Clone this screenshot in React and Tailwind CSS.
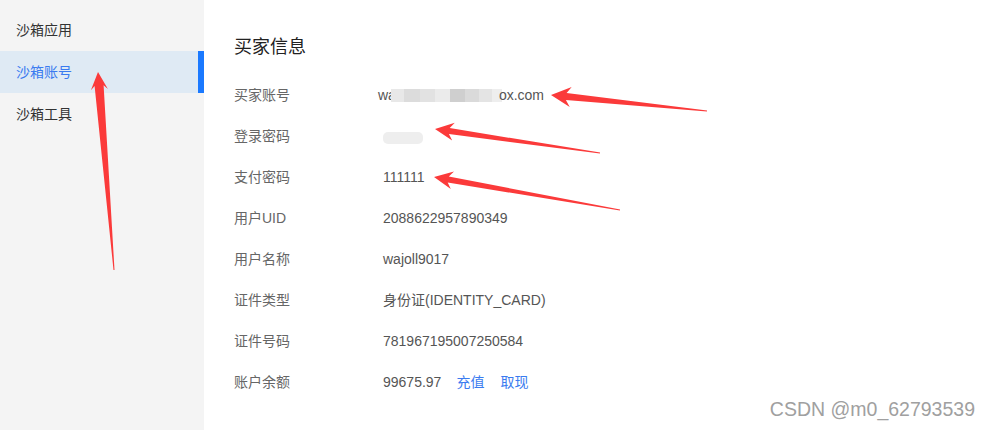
import React from "react";

function arrowPoints(tip, tail, h, w, s1, s0) {
  const dx = tail[0] - tip[0];
  const dy = tail[1] - tip[1];
  const len = Math.hypot(dx, dy);
  const d = [dx / len, dy / len];
  const n = [-d[1], d[0]];
  const P = (base, k, m) => [base[0] + d[0] * k + n[0] * m, base[1] + d[1] * k + n[1] * m];
  const pts = [
    tip,
    P(tip, h * 1.1, w / 2),
    P(tip, h * 0.85, s1 / 2),
    P(tail, 0, s0 / 2),
    P(tail, 0, -s0 / 2),
    P(tip, h * 0.85, -s1 / 2),
    P(tip, h * 1.1, -w / 2),
  ];
  return pts.map((p) => p[0].toFixed(1) + "," + p[1].toFixed(1)).join(" ");
}

const arrows = [
  { tip: [551, 95], tail: [707, 111], h: 18, w: 20, s1: 7, s0: 1 },
  { tip: [435, 129], tail: [600, 153], h: 17, w: 18, s1: 6, s0: 1 },
  { tip: [434, 177], tail: [620, 210], h: 17, w: 18, s1: 6, s0: 1 },
  { tip: [98, 72], tail: [114, 270], h: 16, w: 17, s1: 9, s0: 1 },
];

const rows = [
  { label: "买家账号", value: "email" },
  { label: "登录密码", value: "blur" },
  { label: "支付密码", value: "111111" },
  { label: "用户UID", value: "2088622957890349" },
  { label: "用户名称", value: "wajoll9017" },
  { label: "证件类型", value: "身份证(IDENTITY_CARD)" },
  { label: "证件号码", value: "781967195007250584" },
  { label: "账户余额", value: "balance" },
];

function Value({ v }) {
  if (v === "email") {
    return (
      <span className="ml-[-5px] flex items-center">
        <span>wa</span>
        <span className="flex h-[13px] items-stretch ml-[-5px]">
          <span className="w-[13px] bg-[#e8e8e8]" />
          <span className="w-[16px] bg-[#dcdcdc]" />
          <span className="w-[15px] bg-[#e2e2e2]" />
          <span className="w-[15px] bg-[#ebebeb]" />
          <span className="w-[15px] bg-[#cfcfcf]" />
          <span className="w-[14px] bg-[#dadada]" />
          <span className="w-[13px] bg-[#e4e4e4]" />
          <span className="w-[10px] bg-[#eeeeee]" />
        </span>
        <span className="ml-[-3px]">ox.com</span>
      </span>
    );
  }
  if (v === "blur") {
    return <span className="inline-block h-[12px] w-[40px] rounded-[5px] bg-[#eeeeee] mt-[2px]" />;
  }
  if (v === "balance") {
    return (
      <span className="flex items-center">
        <span>99675.97</span>
        <span className="ml-[15px] text-[#3a7bf0]">充值</span>
        <span className="ml-[16px] text-[#3a7bf0]">取现</span>
      </span>
    );
  }
  return <span>{v}</span>;
}

export default function App() {
  const font = { fontFamily: '"Liberation Sans", Arial, "Noto Sans CJK SC", sans-serif' };
  return (
    <div className="relative flex h-[430px] w-[989px] overflow-hidden bg-white" style={font}>
      <aside className="h-full w-[204px] bg-[#f4f4f4] pt-[9px]">
        <div className="flex h-[42px] items-center pl-[16px] text-[14px] text-[#333333]">沙箱应用</div>
        <div className="flex h-[42px] items-center justify-between bg-[#dfeaf4] pl-[16px] text-[14px] text-[#3a7bf0]">
          <span>沙箱账号</span>
          <span className="h-full w-[6px] bg-[#1a79ff]" />
        </div>
        <div className="flex h-[42px] items-center pl-[16px] text-[14px] text-[#333333]">沙箱工具</div>
      </aside>
      <main className="flex-1 pl-[30px] pt-[35px]">
        <h2 className="mb-[16px] h-[24px] text-[18px] leading-[24px] text-[#222222]">买家信息</h2>
        {rows.map((r) => (
          <div key={r.label} className="flex h-[41px] items-center text-[14px]">
            <div className="w-[149px] text-[#666666]">{r.label}</div>
            <div className="flex items-center text-[#555555]">
              <Value v={r.value} />
            </div>
          </div>
        ))}
      </main>
      <div
        className="absolute bottom-[6px] right-[14px] text-[19.5px] text-[#a0a0a0]"
        style={{ textShadow: "0 0 1px #ffffff" }}
      >
        CSDN @m0_62793539
      </div>
      <svg className="pointer-events-none absolute left-0 top-0" width="989" height="430">
        {arrows.map((a, i) => (
          <polygon key={i} points={arrowPoints(a.tip, a.tail, a.h, a.w, a.s1, a.s0)} fill="#fb3a3a" />
        ))}
      </svg>
    </div>
  );
}
